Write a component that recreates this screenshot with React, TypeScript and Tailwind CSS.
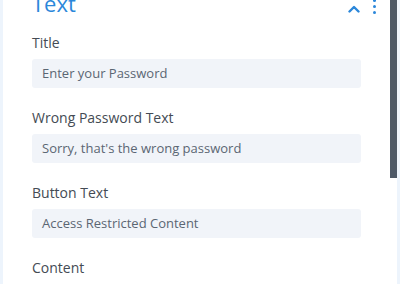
import React from 'react';

const fields = [
  { label: 'Title', value: 'Enter your Password' },
  { label: 'Wrong Password Text', value: "Sorry, that's the wrong password" },
  { label: 'Button Text', value: 'Access Restricted Content' },
];

const App = () => {
  return (
    <div className="flex h-[284px] w-[400px] overflow-hidden bg-white" style={{ fontFamily: '"Open Sans", sans-serif' }}>
      {/* left edge of the panel */}
      <div className="w-[3px] shrink-0 bg-[#edf4fc]"></div>

      <div className="flex-1 px-[29px]">
        {/* toggle header */}
        <div className="-mt-[12px] flex h-[30px] items-center">
          <span className="text-[22px] leading-[30px] text-[#2b87da]">Text</span>
          <div className="ml-auto flex items-center">
            <svg width="12" height="8" viewBox="0 0 12 8" className="mr-[-2px] mt-[12px]">
              <path d="M1.5 6.5 L6 2 L10.5 6.5" fill="none" stroke="#2b87da" strokeWidth="2.4" strokeLinecap="round" strokeLinejoin="round" />
            </svg>
            <div className="ml-[15px] mr-[-15px] mt-[6px] flex flex-col gap-[3px]">
              <span className="h-[3px] w-[3px] rounded-full bg-[#2b87da]"></span>
              <span className="h-[3px] w-[3px] rounded-full bg-[#2b87da]"></span>
              <span className="h-[3px] w-[3px] rounded-full bg-[#2b87da]"></span>
            </div>
          </div>
        </div>

        <div className="mt-[15px] flex flex-col">
          {fields.map((f) => (
            <div key={f.label} className="mb-[20px]">
              <div className="text-[14px] font-medium leading-[20px] text-[#444b54]">{f.label}</div>
              <div className="mt-[6px] flex h-[29px] items-center rounded-[3px] bg-[#f1f4f9] px-[10px] text-[13px] font-medium text-[#5b6673]">
                {f.value}
              </div>
            </div>
          ))}
          <div className="text-[14px] font-medium leading-[20px] text-[#444b54]">Content</div>
        </div>
      </div>

      {/* scrollbar */}
      <div className="flex w-[10px] shrink-0">
        <div className="w-[7px]">
          <div className="h-[178px] bg-[#4d5967]"></div>
        </div>
        <div className="w-[3px] bg-[#edf4fc]"></div>
      </div>
    </div>
  );
};

export default App;
